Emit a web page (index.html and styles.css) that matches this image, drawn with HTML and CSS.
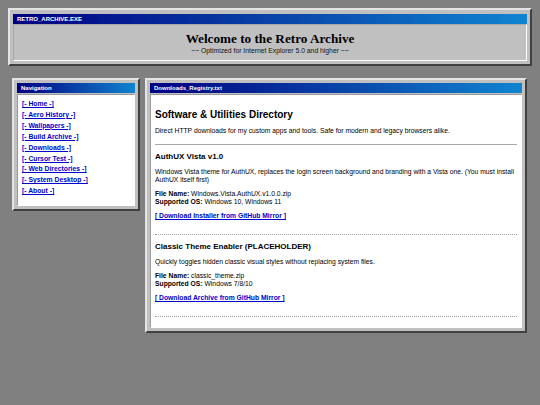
FILE: index.html
```html
<!DOCTYPE html>
<html>
<head>
<meta charset="utf-8">
<title>Retro Archive</title>
<link rel="stylesheet" href="styles.css">
</head>
<body>
<div class="window header-win">
  <div class="titlebar">RETRO_ARCHIVE.EXE</div>
  <div class="header-body">
    <h1>Welcome to the Retro Archive</h1>
    <p class="tagline">~~ Optimized for Internet Explorer 5.0 and higher ~~</p>
  </div>
</div>
<div class="layout">
  <div class="window nav-win">
    <div class="titlebar">Navigation</div>
    <ul class="nav-body">
      <li><a href="#">[- Home -]</a></li>
      <li><a href="#">[- Aero History -]</a></li>
      <li><a href="#">[- Wallpapers -]</a></li>
      <li><a href="#">[- Build Archive -]</a></li>
      <li><a href="#">[- Downloads -]</a></li>
      <li><a href="#">[- Cursor Test -]</a></li>
      <li><a href="#">[- Web Directories -]</a></li>
      <li><a href="#">[- System Desktop -]</a></li>
      <li><a href="#">[- About -]</a></li>
    </ul>
  </div>
  <div class="window main-win">
    <div class="titlebar">Downloads_Registry.txt</div>
    <div class="main-body">
      <h2>Software &amp; Utilities Directory</h2>
      <p class="intro">Direct HTTP downloads for my custom apps and tools. Safe for modern and legacy browsers alike.</p>
      <div class="rule"></div>
      <div class="item">
        <h3>AuthUX Vista v1.0</h3>
        <p class="desc">Windows Vista theme for AuthUX, replaces the login screen background and branding with a Vista one. (You must install AuthUX itself first)</p>
        <p class="meta"><b>File Name:</b> Windows.Vista.AuthUX.v1.0.0.zip<br><b>Supported OS:</b> Windows 10, Windows 11</p>
        <p class="dl"><a href="#">[ Download Installer from GitHub Mirror ]</a></p>
      </div>
      <div class="item">
        <h3>Classic Theme Enabler (PLACEHOLDER)</h3>
        <p class="desc">Quickly toggles hidden classic visual styles without replacing system files.</p>
        <p class="meta"><b>File Name:</b> classic_theme.zip<br><b>Supported OS:</b> Windows 7/8/10</p>
        <p class="dl"><a href="#">[ Download Archive from GitHub Mirror ]</a></p>
      </div>
    </div>
  </div>
</div>
</body>
</html>
```

FILE: styles.css
```css
* { box-sizing: border-box; }

html, body {
  margin: 0;
  padding: 0;
}

body {
  background: #808080;
  padding: 8px;
  font-family: "Liberation Sans", Arial, sans-serif;
  color: #000;
}

.window {
  background: #c0c0c0;
  border: 2px solid;
  border-color: #e4e4e4 #404040 #404040 #e4e4e4;
  padding: 3px;
}

.header-win {
  padding-top: 4px;
}

.titlebar {
  height: 10px;
  line-height: 10px;
  padding-left: 4px;
  background: linear-gradient(to right, #000080, #1084d0);
  color: #fff;
  font-weight: bold;
  font-size: 6px;
  white-space: nowrap;
  overflow: hidden;
}

.header-body {
  border: 1px solid;
  border-color: #a8a8a8 #ffffff #ffffff #a8a8a8;
  padding: 6px 0 5px;
  text-align: center;
}

.header-body h1 {
  margin: 0;
  font-family: "Liberation Serif", "Times New Roman", serif;
  font-size: 13.2px;
  line-height: 15px;
  font-weight: bold;
}

.tagline {
  margin: 1px 0 0;
  font-size: 6.8px;
  line-height: 8px;
  color: #111;
}

.layout {
  display: flex;
  align-items: flex-start;
  gap: 5px;
  margin-top: 12px;
  padding: 0 5px 0 4px;
}

.nav-win {
  width: 128px;
  flex: none;
}

.main-win {
  flex: 1;
}

.nav-body,
.main-body {
  margin: 1px 0 0;
  background: #fff;
  border: 1px solid;
  border-color: #9a9a9a #ffffff #ffffff #9a9a9a;
}

.nav-body {
  list-style: none;
  padding: 4px 4px 8px;
}

.nav-body li {
  line-height: 10.9px;
  font-size: 6.8px;
  font-weight: bold;
}

a {
  color: #0000cc;
  text-decoration: underline;
}

.main-body {
  padding: 14px 4px 10px;
}

.main-body h2 {
  margin: 0;
  font-size: 10px;
  line-height: 12px;
  font-weight: bold;
}

.intro {
  margin: 6px 0 0;
  font-size: 6.75px;
  line-height: 8px;
}

.rule {
  margin-top: 9px;
  border-top: 1px solid #a9a9a9;
}

.item {
  padding-bottom: 14px;
  border-bottom: 1px dotted #a0a0a0;
}

.item h3 {
  margin: 7px 0 0;
  font-size: 8px;
  line-height: 9px;
  font-weight: bold;
}

.desc {
  margin: 7px 0 0;
  font-size: 6.75px;
  line-height: 8px;
}

.meta {
  margin: 6px 0 0;
  font-size: 6.75px;
  line-height: 8px;
}

.dl {
  margin: 6px 0 0;
  font-size: 6.75px;
  line-height: 8px;
  font-weight: bold;
}
```
